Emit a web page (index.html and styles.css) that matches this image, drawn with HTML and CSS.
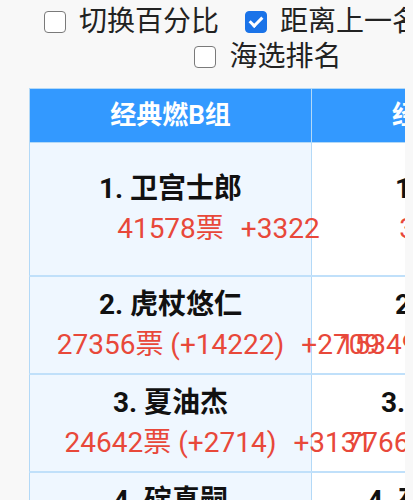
FILE: index.html
```html
<!DOCTYPE html>
<html lang="zh">
<head>
<meta charset="utf-8">
<title>排名</title>
<link rel="stylesheet" href="styles.css">
</head>
<body>
<div class="page">
  <div class="options">
    <label class="opt"><input type="checkbox" class="box"><span>切换百分比</span></label>
    <label class="opt opt-wide"><input type="checkbox" class="box" checked><span>距离上一名票差</span></label>
    <label class="opt"><input type="checkbox" class="box"><span>海选排名</span></label>
  </div>
  <table class="rank">
    <colgroup><col class="c"><col class="c"></colgroup>
    <thead>
      <tr><th>经典燃B组</th><th>经典燃C组</th></tr>
    </thead>
    <tbody>
      <tr class="top">
        <td class="main">
          <div class="name">1. 卫宫士郎</div>
          <div class="vline"><span class="votes">41578票<span class="inc">+3322</span></span></div>
        </td>
        <td>
          <div class="name">1. 五条悟</div>
          <div class="vline"><span class="votes">36218票<span class="inc">+2904</span></span></div>
        </td>
      </tr>
      <tr>
        <td class="main">
          <div class="name">2. 虎杖悠仁</div>
          <div class="vline"><span class="votes">27356票 (+14222)<span class="inc">+2709</span></span></div>
        </td>
        <td>
          <div class="name">2. 伏黑惠</div>
          <div class="vline"><span class="votes">15349票 (+20869)<span class="inc">+1702</span></span></div>
        </td>
      </tr>
      <tr>
        <td class="main">
          <div class="name">3. 夏油杰</div>
          <div class="vline"><span class="votes">24642票 (+2714)<span class="inc">+3131</span></span></div>
        </td>
        <td>
          <div class="name">3. 七海建人</div>
          <div class="vline"><span class="votes">77661票 (+7688)<span class="inc">+1210</span></span></div>
        </td>
      </tr>
      <tr>
        <td class="main">
          <div class="name">4. 碇真嗣</div>
          <div class="vline"><span class="votes">20518票 (+4124)<span class="inc">+1982</span></span></div>
        </td>
        <td>
          <div class="name">4. 夜蛾正道君</div>
          <div class="vline"><span class="votes">6512票 (+1254)<span class="inc">+903</span></span></div>
        </td>
      </tr>
    </tbody>
  </table>
</div>
</body>
</html>
```
FILE: styles.css
```css
body {
  margin: 4px 8px 8px;
  background: #f8f8f8;
  font-family: Roboto, "Noto Sans CJK SC", sans-serif;
}
.page {
  width: 520px;
}
.options {
  display: flex;
  flex-wrap: wrap;
  justify-content: center;
  column-gap: 26px;
  font-size: 28px;
  line-height: 35px;
  color: #222;
  margin-bottom: 14px;
}
.opt {
  display: flex;
  align-items: center;
  gap: 13px;
  white-space: nowrap;
}
.opt-wide {
  padding-right: 16px;
}
.box {
  appearance: none;
  -webkit-appearance: none;
  margin: 0;
  width: 22px;
  height: 22px;
  box-sizing: border-box;
  border: 1.5px solid #7a7a7a;
  border-radius: 4px;
  background: #fff;
  position: relative;
}
.box:checked {
  background: #1a73e8;
  border-color: #1a73e8;
}
.box:checked::after {
  content: "";
  position: absolute;
  left: 6px;
  top: 2px;
  width: 5px;
  height: 10px;
  border: solid #fff;
  border-width: 0 3px 3px 0;
  transform: rotate(45deg);
}
.rank {
  border-collapse: collapse;
  table-layout: fixed;
  width: 564px;
  margin-left: 21px;
}
.c {
  width: 282px;
}
.rank th {
  background: #3399ff;
  color: #fff;
  font-size: 26px;
  font-weight: bold;
  line-height: 39px;
  padding: 7px 8px;
  border: 1px solid #b3d9f7;
}
.rank td {
  text-align: center;
  vertical-align: middle;
  padding: 8px;
  background: #fff;
  border-left: 1px solid #b3d9f7;
  border-right: 1px solid #b3d9f7;
  border-bottom: 2px solid #c0e0fa;
  white-space: nowrap;
}
.rank td.main {
  background: #eff7ff;
}
.rank .top td {
  padding: 26px 8px;
}
.name {
  font-size: 28px;
  font-weight: bold;
  line-height: 40px;
  color: #111;
}
.vline {
  font-size: 28px;
  line-height: 40px;
  color: #e8483a;
}
.votes {
  position: relative;
  display: inline-block;
}
.inc {
  position: absolute;
  left: 100%;
  top: 0;
  margin-left: 17px;
  white-space: nowrap;
}
```
